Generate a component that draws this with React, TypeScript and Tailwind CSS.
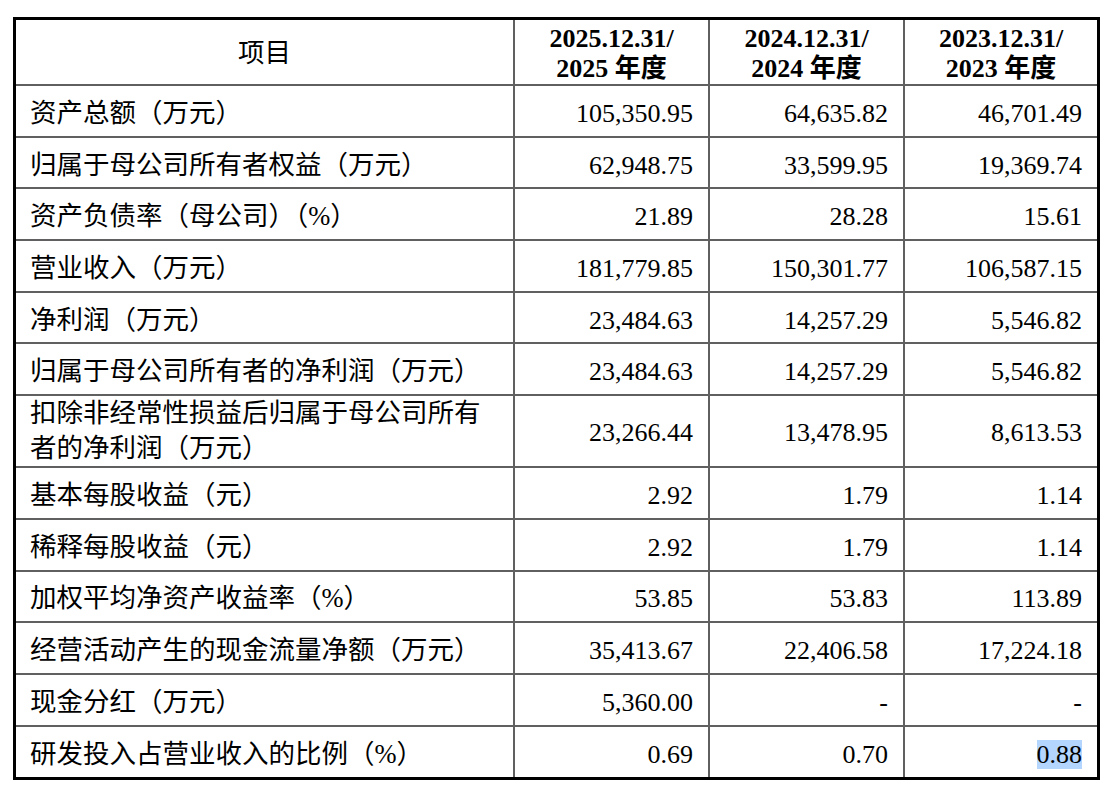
import React from 'react';

const rows: { label: React.ReactNode; values: string[]; tall?: boolean }[] = [
  { label: '资产总额（万元）', values: ['105,350.95', '64,635.82', '46,701.49'] },
  { label: '归属于母公司所有者权益（万元）', values: ['62,948.75', '33,599.95', '19,369.74'] },
  { label: '资产负债率（母公司）（%）', values: ['21.89', '28.28', '15.61'] },
  { label: '营业收入（万元）', values: ['181,779.85', '150,301.77', '106,587.15'] },
  { label: '净利润（万元）', values: ['23,484.63', '14,257.29', '5,546.82'] },
  { label: '归属于母公司所有者的净利润（万元）', values: ['23,484.63', '14,257.29', '5,546.82'] },
  {
    label: (
      <>
        扣除非经常性损益后归属于母公司所有
        <br />
        者的净利润（万元）
      </>
    ),
    values: ['23,266.44', '13,478.95', '8,613.53'],
    tall: true,
  },
  { label: '基本每股收益（元）', values: ['2.92', '1.79', '1.14'] },
  { label: '稀释每股收益（元）', values: ['2.92', '1.79', '1.14'] },
  { label: '加权平均净资产收益率（%）', values: ['53.85', '53.83', '113.89'] },
  { label: '经营活动产生的现金流量净额（万元）', values: ['35,413.67', '22,406.58', '17,224.18'] },
  { label: '现金分红（万元）', values: ['5,360.00', '-', '-'] },
  { label: '研发投入占营业收入的比例（%）', values: ['0.69', '0.70', '0.88'] },
];

const years = ['2025', '2024', '2023'];

const App = () => {
  return (
    <div className="min-h-[794px] w-[1107px] bg-white pl-[13px] pt-[17px] text-black font-['Liberation_Serif','Noto_Sans_CJK_SC',serif]">
      <div className="w-[1087px] border-[3px] border-black">
        <table className="w-full table-fixed border-collapse border-hidden">
          <colgroup>
            <col className="w-[498px]" />
            <col className="w-[195px]" />
            <col className="w-[195px]" />
            <col />
          </colgroup>
          <thead>
            <tr className="h-[65px]">
              <th className="border-2 border-[#606060] pt-[4px] text-center align-middle text-[26.5px] font-normal">
                项目
              </th>
              {years.map((y) => (
                <th
                  key={y}
                  className="border-2 border-[#606060] pt-[4px] text-center align-middle text-[26px] font-bold leading-[30px]"
                >
                  {y}.12.31/
                  <br />
                  {y} 年度
                </th>
              ))}
            </tr>
          </thead>
          <tbody>
            {rows.map((row, i) => (
              <tr key={i} className={row.tall ? 'h-[71px]' : 'h-[51.7px]'}>
                <td
                  className={`border-2 border-[#606060] pl-[14px] align-middle text-[26.5px] leading-[35px] ${
                    row.tall ? 'pt-0' : 'pt-[5px]'
                  }`}
                >
                  {row.label}
                </td>
                {row.values.map((v, j) => (
                  <td
                    key={j}
                    className={`border-2 border-[#606060] pr-[15px] text-right align-middle text-[26px] leading-[35px] ${
                      row.tall ? 'pt-[2px]' : 'pt-[5px]'
                    }`}
                  >
                    {i === rows.length - 1 && j === 2 ? (
                      <span className="bg-[#b4d5fe]">{v}</span>
                    ) : (
                      v
                    )}
                  </td>
                ))}
              </tr>
            ))}
          </tbody>
        </table>
      </div>
    </div>
  );
};

export default App;
